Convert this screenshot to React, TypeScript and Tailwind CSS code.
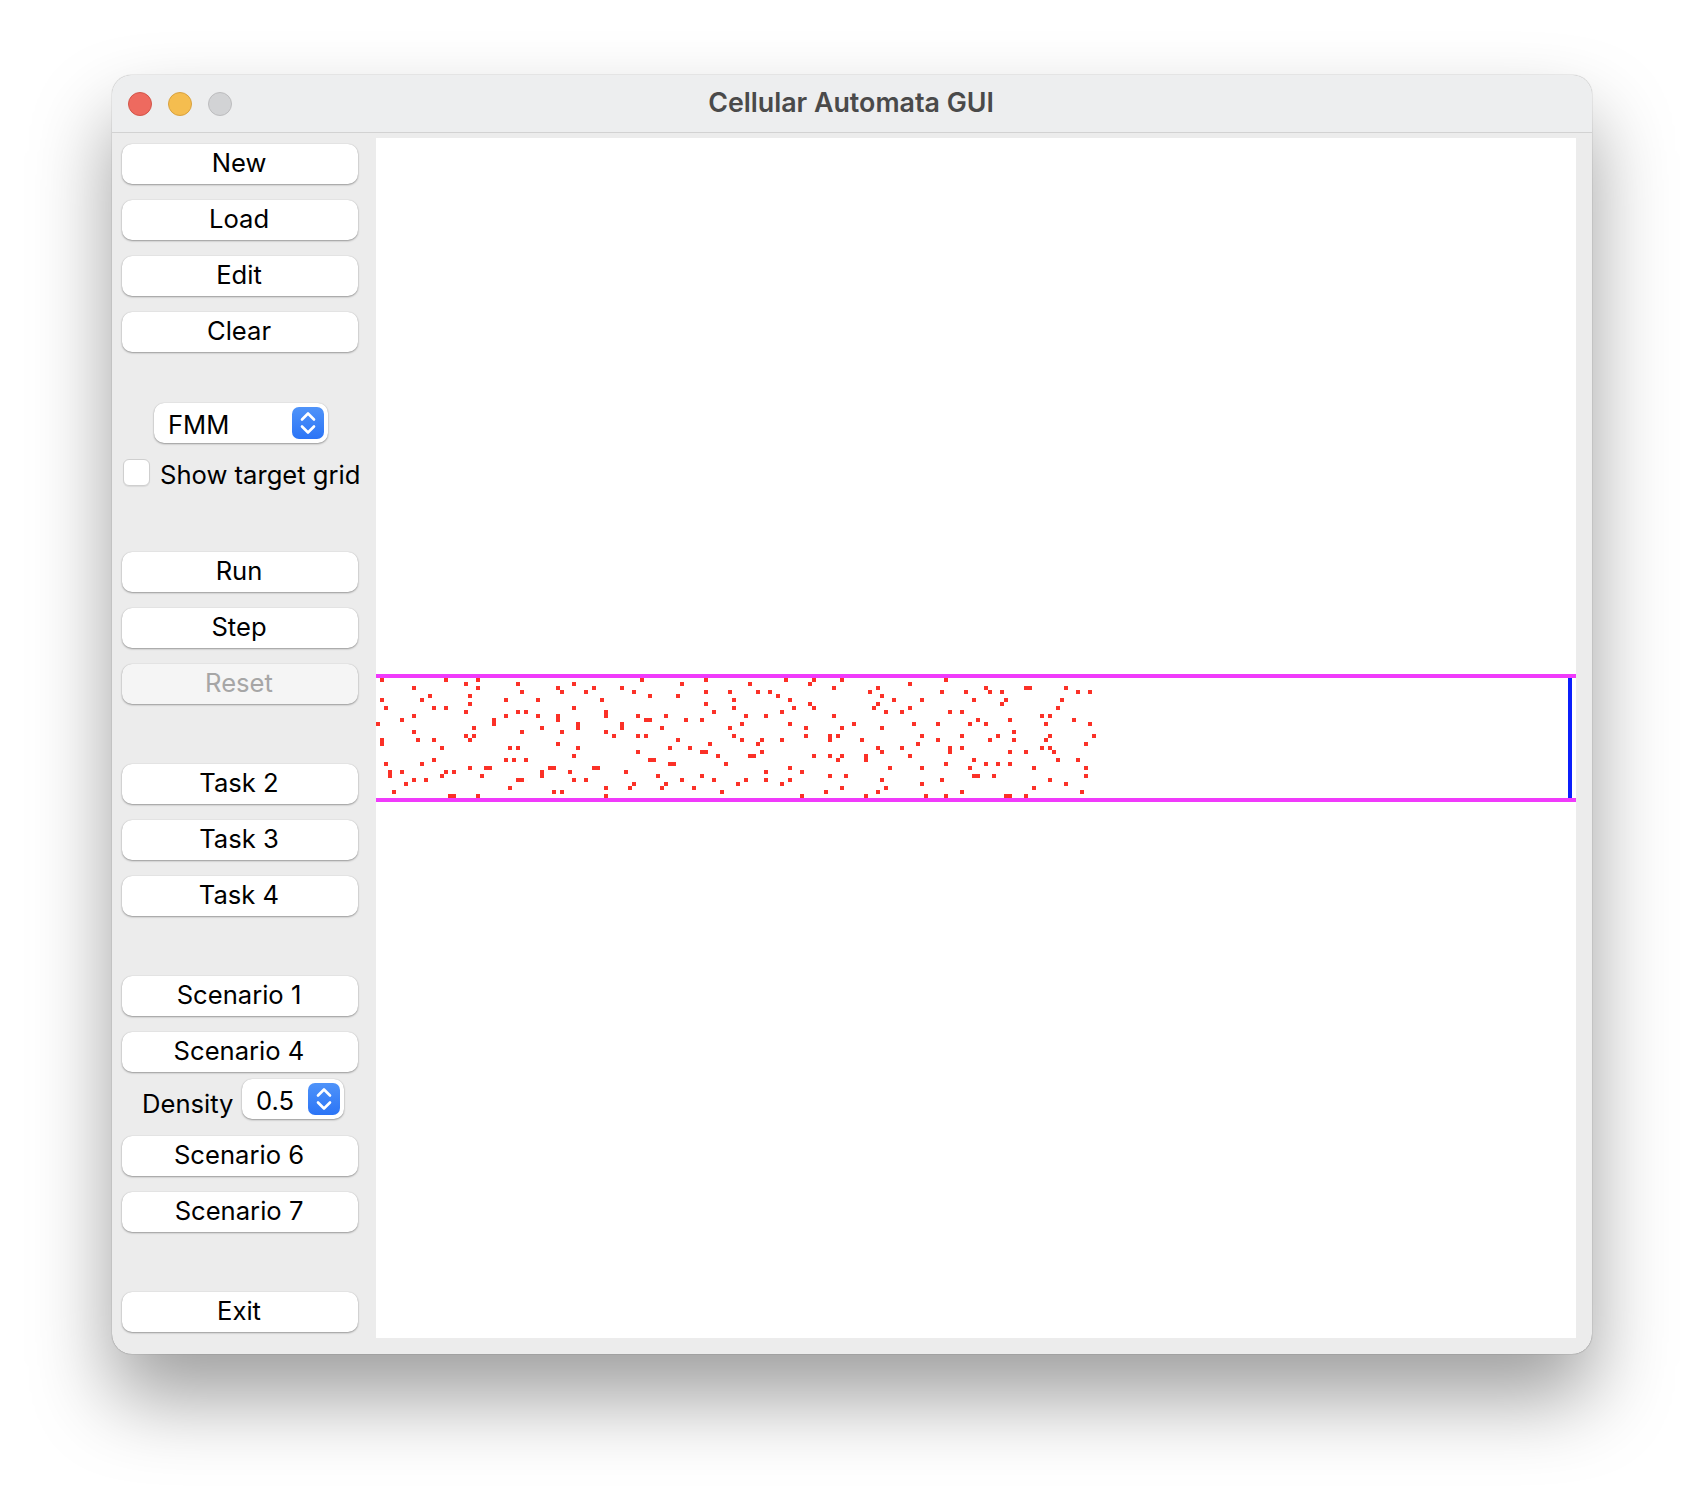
const font = { fontFamily: 'Inter, "Liberation Sans", sans-serif' }

// live cells per row, column index on the 4px grid
const rows: number[][] = [
  [1, 17, 25, 66, 82, 102, 109, 116, 142],
  [22, 35, 49, 76, 93, 108, 133],
  [9, 25, 45, 54, 61, 114, 125, 152, 162, 163, 172],
  [36, 46, 52, 64, 82, 88, 95, 98, 123, 141, 147, 153, 156, 175, 178],
  [13, 23, 68, 75, 100, 126],
  [1, 11, 32, 40, 56, 89, 103, 129, 136, 149, 157, 171],
  [23, 82, 108, 125, 156],
  [2, 14, 17, 49, 89, 104, 109, 124, 133, 170],
  [22, 35, 37, 57, 84, 101, 127, 131, 143, 146],
  [9, 32, 40, 45, 57, 65, 72, 92, 97, 114, 166, 168],
  [6, 29, 45, 67, 68, 77, 81, 150, 158, 174],
  [0, 29, 50, 61, 91, 103, 119, 134, 140, 148, 152, 167, 178],
  [24, 41, 50, 61, 71, 88, 107, 116, 126],
  [9, 36, 46, 57, 159],
  [22, 24, 59, 65, 67, 89, 107, 113, 115, 136, 146, 155, 168, 179],
  [1, 10, 14, 23, 75, 91, 96, 101, 113, 121, 140, 153, 159, 167],
  [1, 45, 83, 95, 135, 177],
  [16, 33, 35, 50, 73, 78, 125, 131, 143, 146, 166, 168],
  [65, 81, 82, 96, 126, 143, 158, 162, 169],
  [49, 85, 93, 94, 109, 113, 116, 122, 133],
  [14, 32, 34, 37, 68, 69, 115, 122, 149, 170, 175],
  [2, 11, 73, 74, 87, 142, 152, 155, 158],
  [23, 27, 28, 43, 44, 54, 55, 103, 128, 136, 148, 164, 177],
  [3, 6, 17, 19, 41, 48, 62, 97, 106],
  [3, 16, 26, 41, 70, 81, 113, 117, 149, 150, 154, 177],
  [9, 12, 35, 36, 49, 52, 76, 84, 92, 97, 103, 126, 141, 168],
  [7, 64, 72, 90, 101, 136, 172],
  [33, 57, 63, 71, 79, 116, 127, 164],
  [4, 44, 46, 86, 112, 125, 146, 176],
  [18, 19, 25, 57, 106, 122, 137, 142, 157, 158, 162],
]

function Button({ label, disabled, className = '' }: { label: string; disabled?: boolean; className?: string }) {
  return (
    <button
      disabled={disabled}
      className={`w-[236px] h-[40px] shrink-0 rounded-[10px] pr-[2px] pb-[2px] text-[25.6px] leading-[36px] text-center shadow-[0_1px_2px_rgba(0,0,0,0.35),0_0_1px_rgba(0,0,0,0.2)] ${
        disabled ? 'bg-[#f5f5f5] text-[#a6a6a6]' : 'bg-white text-black'
      } ${className}`}
    >
      {label}
    </button>
  )
}

function Stepper() {
  return (
    <div className="w-[32px] h-[32px] rounded-[7px] bg-gradient-to-b from-[#4f93f9] to-[#2b74f6] flex items-center justify-center">
      <svg width="20" height="28" viewBox="0 0 20 28" fill="none" stroke="white" strokeWidth="2.6" strokeLinecap="round" strokeLinejoin="round">
        <path d="M4 10.5 L10 4.5 L16 10.5" />
        <path d="M4 17.5 L10 23.5 L16 17.5" />
      </svg>
    </div>
  )
}

function Select({ value, className, textClass = '' }: { value: string; className: string; textClass?: string }) {
  return (
    <div className={`h-[40px] rounded-[10px] bg-white shadow-[0_1px_2px_rgba(0,0,0,0.35),0_0_1px_rgba(0,0,0,0.2)] flex items-center justify-between pr-[4px] text-[25.6px] text-black ${className}`}>
      <span className={textClass}>{value}</span>
      <Stepper />
    </div>
  )
}

export default function App() {
  return (
    <div className="w-[1704px] h-[1502px] bg-white pt-[75px] pl-[112px] overflow-hidden" style={font}>
      <div className="w-[1480px] h-[1279px] rounded-[20px] bg-[#ececec] overflow-hidden shadow-[0_44px_80px_rgba(0,0,0,0.38),0_0_1px_rgba(0,0,0,0.6)]">
        <div className="h-[58px] bg-[#edeeef] border-b border-[#d2d2d2] grid grid-cols-[1fr_auto_1fr] items-center pl-[16px]">
          <div className="flex gap-[16px]">
            <span className="w-[24px] h-[24px] rounded-full bg-[#ee6a5f] border border-[#d25549]" />
            <span className="w-[24px] h-[24px] rounded-full bg-[#f5bd4f] border border-[#d8a13f]" />
            <span className="w-[24px] h-[24px] rounded-full bg-[#d2d3d5] border border-[#bcbcbe]" />
          </div>
          <div className="text-[26.8px] leading-[38px] pb-[4px] font-semibold text-[#4a4a4a] -ml-[18px]">Cellular Automata GUI</div>
          <div />
        </div>
        <div className="flex">
          <div className="w-[264px] shrink-0 pl-[10px] pt-[11px] flex flex-col">
            <div className="flex flex-col gap-[16px]">
              <Button label="New" />
              <Button label="Load" />
              <Button label="Edit" />
              <Button label="Clear" />
            </div>
            <Select value="FMM" className="w-[174px] ml-[32px] mt-[51px] pl-[14px]" textClass="mt-[4px]" />
            <div className="flex items-center h-[28px] mt-[15px] ml-[1px] text-[25.6px] text-black whitespace-nowrap">
              <span className="w-[27px] h-[27px] rounded-[6px] bg-white border border-[#cfcfcf] shadow-[0_1px_1px_rgba(0,0,0,0.08)] mr-[10px] shrink-0" />
              <span className="mt-[6px]">Show target grid</span>
            </div>
            <div className="flex flex-col gap-[16px] mt-[66px]">
              <Button label="Run" />
              <Button label="Step" />
              <Button label="Reset" disabled />
            </div>
            <div className="flex flex-col gap-[16px] mt-[60px]">
              <Button label="Task 2" />
              <Button label="Task 3" />
              <Button label="Task 4" />
            </div>
            <div className="flex flex-col gap-[16px] mt-[60px]">
              <Button label="Scenario 1" />
              <Button label="Scenario 4" />
            </div>
            <div className="flex items-center h-[40px] mt-[7px] pl-[20px] text-[25.6px] text-black">
              <span className="w-[100px] h-[36px] leading-[36px] mt-[9px]">Density</span>
              <Select value="0.5" className="w-[102px] pl-[14px]" textClass="mt-[4px]" />
            </div>
            <div className="flex flex-col gap-[16px] mt-[17px]">
              <Button label="Scenario 6" />
              <Button label="Scenario 7" />
            </div>
            <Button label="Exit" className="mt-[60px]" />
          </div>
          <svg width="1200" height="1200" viewBox="0 0 1200 1200" shapeRendering="crispEdges" className="mt-[5px] shrink-0 bg-white">
            <rect x="0" y="536" width="1200" height="4" fill="#f03afb" />
            <rect x="0" y="660" width="1200" height="4" fill="#f03afb" />
            <rect x="1192" y="540" width="4" height="120" fill="#0b1ffb" />
            {rows.map((cols, r) =>
              cols.map((c) => <rect key={`${r}-${c}`} x={c * 4} y={540 + r * 4} width="4" height="4" fill="#fb3127" />)
            )}
          </svg>
        </div>
      </div>
    </div>
  )
}
